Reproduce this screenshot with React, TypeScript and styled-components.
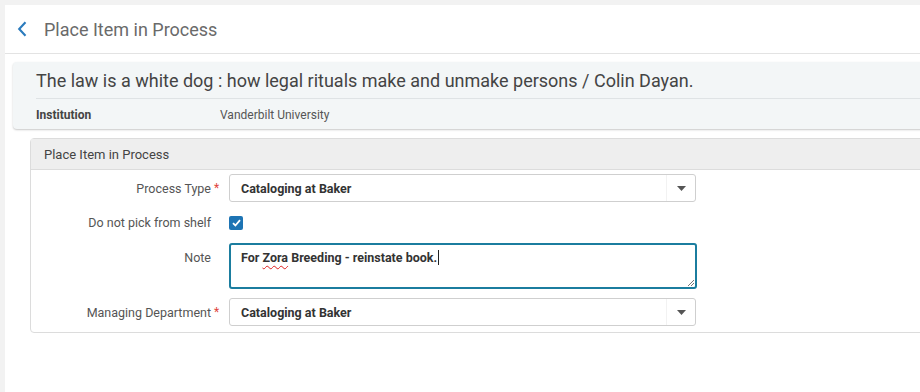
import React from "react";
import styled, { createGlobalStyle } from "styled-components";

const GlobalStyle = createGlobalStyle`
  html, body {
    margin: 0;
    padding: 0;
    background: #f2f2f2;
    font-family: Roboto, "Liberation Sans", Arial, sans-serif;
    overflow: hidden;
  }
`;

type Field = {
  label: string;
  required?: boolean;
  kind: "select" | "checkbox" | "note";
  value?: string;
};

const fields: Field[] = [
  { label: "Process Type", required: true, kind: "select", value: "Cataloging at Baker" },
  { label: "Do not pick from shelf", kind: "checkbox" },
  { label: "Note", kind: "note" },
  { label: "Managing Department", required: true, kind: "select", value: "Cataloging at Baker" },
];

const App: React.FunctionComponent = () => {
  return (
    <Page>
      <GlobalStyle />
      <Main>
        <Header>
          <BackButton aria-label="back">
            <svg width="12" height="16" viewBox="0 0 12 16">
              <path d="M8.5 1.2 L2.2 8 L8.5 14.8" fill="none" stroke="#2b7bbd" strokeWidth="2.1" />
            </svg>
          </BackButton>
          <PageTitle>Place Item in Process</PageTitle>
        </Header>

        <RecordCard>
          <RecordTitle>
            The law is a white dog : how legal rituals make and unmake persons / Colin Dayan.
          </RecordTitle>
          <InfoRow>
            <InfoLabel>Institution</InfoLabel>
            <InfoValue>Vanderbilt University</InfoValue>
          </InfoRow>
        </RecordCard>

        <Panel>
          <PanelHeader>Place Item in Process</PanelHeader>
          <PanelBody>
            {fields.map((f) => (
              <FormRow key={f.label} $kind={f.kind}>
                <Label $top={f.kind === "note"}>
                  {f.label}
                  {f.required && <Required>*</Required>}
                </Label>
                {f.kind === "select" && (
                  <Select>
                    <SelectValue>{f.value}</SelectValue>
                    <SelectArrow>
                      <svg width="9" height="5" viewBox="0 0 9 5">
                        <path d="M0 0 H9 L4.5 5 Z" fill="#555" />
                      </svg>
                    </SelectArrow>
                  </Select>
                )}
                {f.kind === "checkbox" && (
                  <Checkbox>
                    <svg width="9" height="8" viewBox="0 0 9 8">
                      <path d="M1 4.2 L3.4 6.5 L8 1.2" fill="none" stroke="#fff" strokeWidth="1.8" />
                    </svg>
                  </Checkbox>
                )}
                {f.kind === "note" && (
                  <NoteBox>
                    For <Misspelled>Zora</Misspelled> Breeding - reinstate book.
                    <Caret />
                    <Grip>
                      <svg width="8" height="8" viewBox="0 0 8 8">
                        <path d="M7 1 L1 7 M7 4 L4 7" stroke="#777" strokeWidth="1" />
                      </svg>
                    </Grip>
                  </NoteBox>
                )}
              </FormRow>
            ))}
          </PanelBody>
        </Panel>
      </Main>
    </Page>
  );
};
export default App;

const Page = styled.div`
  width: 920px;
  height: 392px;
  padding: 5px 0 0 5px;
  box-sizing: border-box;
  overflow: hidden;
`;

const Main = styled.div`
  background: #fff;
  height: 100%;
  width: 960px;
`;

const Header = styled.div`
  height: 49px;
  display: flex;
  align-items: center;
  border-bottom: 1px solid #e3e3e3;
  box-sizing: border-box;
`;

const BackButton = styled.div`
  width: 39px;
  display: flex;
  justify-content: flex-end;
  & svg {
    margin-right: 15px;
  }
`;

const PageTitle = styled.div`
  font-size: 18px;
  color: #6a6a6a;
`;

const RecordCard = styled.div`
  margin: 8px 0 0 8px;
  background: #f3f6f7;
  border-radius: 4px 0 0 4px;
  box-shadow: 0 1px 2px rgba(0, 0, 0, 0.22);
  padding-left: 23px;
`;

const RecordTitle = styled.div`
  height: 37px;
  display: flex;
  align-items: center;
  padding-top: 1px;
  font-size: 18px;
  color: #444;
  border-bottom: 1px solid #dfe3e5;
  box-sizing: border-box;
`;

const InfoRow = styled.div`
  height: 30px;
  display: flex;
  align-items: center;
  padding-top: 2px;
  box-sizing: border-box;
  font-size: 12px;
`;

const InfoLabel = styled.div`
  width: 184px;
  font-weight: 700;
  color: #444;
`;

const InfoValue = styled.div`
  color: #555;
`;

const Panel = styled.div`
  margin: 9px 0 0 25px;
  border: 1px solid #dcdcdc;
  border-radius: 4px;
`;

const PanelHeader = styled.div`
  height: 30px;
  display: flex;
  align-items: center;
  padding-left: 13px;
  background: #eeeeee;
  border-bottom: 1px solid #dcdcdc;
  font-size: 13px;
  color: #444;
`;

const PanelBody = styled.div`
  display: flex;
  flex-direction: column;
  gap: 7px;
  padding: 4px 0 6px;
`;

const FormRow = styled.div<{ $kind: Field["kind"] }>`
  display: flex;
  align-items: ${(p) => (p.$kind === "note" ? "flex-start" : "center")};
  min-height: 27px;
  margin-bottom: ${(p) => (p.$kind === "note" ? "2px" : "0")};
`;

const Label = styled.div<{ $top?: boolean }>`
  position: relative;
  width: 180px;
  flex-shrink: 0;
  margin-right: 18px;
  text-align: right;
  font-size: 12.5px;
  color: #555;
  padding-top: ${(p) => (p.$top ? "7px" : "0")};
`;

const Required = styled.span`
  position: absolute;
  left: calc(100% + 3px);
  top: 0;
  color: #e0443d;
  font-size: 12px;
`;

const Select = styled.div`
  width: 467px;
  height: 28px;
  box-sizing: border-box;
  border: 1px solid #cfcfcf;
  border-radius: 3px;
  display: flex;
  align-items: center;
  background: #fff;
`;

const SelectValue = styled.div`
  flex: 1;
  padding-left: 11px;
  font-size: 12.5px;
  font-weight: 700;
  color: #333;
`;

const SelectArrow = styled.div`
  width: 28px;
  height: 100%;
  border-left: 1px solid #f2f2f2;
  display: flex;
  align-items: center;
  justify-content: center;
`;

const Checkbox = styled.div`
  width: 14px;
  height: 14px;
  border-radius: 2px;
  background: #1d74b4;
  display: flex;
  align-items: center;
  justify-content: center;
  margin-top: 1px;
`;

const NoteBox = styled.div`
  position: relative;
  width: 468px;
  height: 46px;
  box-sizing: border-box;
  border: 2px solid #1b7d9f;
  border-radius: 3px;
  padding: 4px 10px;
  font-size: 12.5px;
  font-weight: 700;
  color: #333;
  line-height: 17px;
`;

const Misspelled = styled.span`
  text-decoration: underline wavy #e02020;
  text-decoration-thickness: 1px;
  text-underline-offset: 3px;
`;

const Caret = styled.span`
  display: inline-block;
  width: 1px;
  height: 15px;
  background: #222;
  vertical-align: -3px;
  margin-left: 1px;
`;

const Grip = styled.div`
  position: absolute;
  right: 0;
  bottom: 0;
  width: 8px;
  height: 8px;
  display: flex;
`;
